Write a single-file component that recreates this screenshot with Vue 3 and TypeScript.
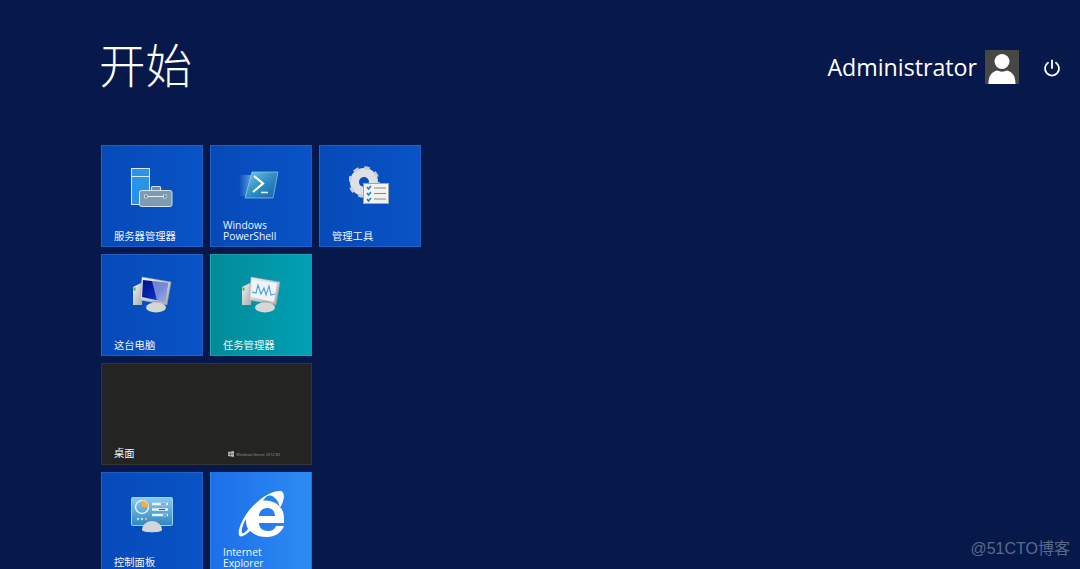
<script setup lang="ts">
interface Tile { label: string; icon: string; kind: string; wide?: boolean }
const tiles: Tile[] = [
  { label: '服务器管理器', icon: 'server', kind: 'blue' },
  { label: 'Windows PowerShell', icon: 'ps', kind: 'blue' },
  { label: '管理工具', icon: 'tools', kind: 'blue' },
  { label: '这台电脑', icon: 'pc', kind: 'blue' },
  { label: '任务管理器', icon: 'task', kind: 'teal' },
  { label: '桌面', icon: 'desktop', kind: 'dark', wide: true },
  { label: '控制面板', icon: 'panel', kind: 'blue' },
  { label: 'Internet Explorer', icon: 'ie', kind: 'sky' },
]
</script>

<template>
  <div class="screen">
    <header class="top">
      <h1 class="title">开始</h1>
      <div class="user">
        <span class="name">Administrator</span>
        <svg class="avatar" width="34" height="34" viewBox="0 0 34 34">
          <rect width="34" height="34" fill="#474845" />
          <circle cx="17" cy="11.500" r="7.500" fill="#fff" />
          <path d="M3.500 34C3.500 26 6 22.500 12 20.500C15 22 19 22 22 20.500C28 22.500 30.500 26 30.500 34Z" fill="#fff" />
        </svg>
        <svg class="power" width="20" height="20" viewBox="0 0 20 20" fill="none" stroke="#fff" stroke-width="1.800" stroke-linecap="round">
          <path d="M10 2.500V10" />
          <path d="M6 4.800A7 7 0 1 0 14 4.800" />
        </svg>
      </div>
    </header>
    <main class="grid">
      <section v-for="t in tiles" :key="t.label" class="tile" :class="[t.kind, t.icon, { wide: t.wide }]">
        <svg v-if="t.icon === 'server'" class="icon" width="44" height="41" viewBox="0 0 44 41">
          <rect x="1.500" y="1.500" width="18" height="36" fill="#2b93e6" stroke="#d5e8f7" />
          <path d="M1.500 9.500H19.500" stroke="#d5e8f7" />
          <rect x="21.500" y="19.500" width="9" height="6" rx="1" fill="#5f8fb5" stroke="#d5e0e8" stroke-width="1.200" />
          <rect x="9.500" y="23.500" width="32.500" height="16" rx="2" fill="#7d9cb2" stroke="#d5e0e8" />
          <path d="M15 29.500H36" stroke="#e8f0f5" />
          <rect x="14.500" y="28" width="2.600" height="3" fill="#3f6f95" stroke="#e8f0f5" stroke-width=".7" />
          <rect x="33.500" y="28" width="2.600" height="3" fill="#3f6f95" stroke="#e8f0f5" stroke-width=".7" />
        </svg>
        <svg v-else-if="t.icon === 'ps'" class="icon" width="46" height="34" viewBox="0 0 46 34">
          <defs>
            <linearGradient id="psg" x1="0" y1="0" x2="1" y2="1">
              <stop offset="0" stop-color="#7cc4e4" />
              <stop offset=".5" stop-color="#2d8fc4" />
              <stop offset="1" stop-color="#17639f" />
            </linearGradient>
            <linearGradient id="pst" x1="0" y1="0" x2="1" y2="0">
              <stop offset="0" stop-color="#8fc4f0" stop-opacity="0" />
              <stop offset="1" stop-color="#8fc4f0" stop-opacity=".7" />
            </linearGradient>
          </defs>
          <path d="M1 7H14L9 28H1Z" fill="url(#pst)" />
          <path d="M14 4H40L35 30H7Z" fill="url(#psg)" stroke="#a9d6ee" stroke-width=".6" />
          <path d="M16 8L25 15.500L15 24" fill="none" stroke="#fff" stroke-width="2.200" />
          <path d="M23 24.500H30" stroke="#d9eef8" stroke-width="1.600" />
        </svg>
        <svg v-else-if="t.icon === 'tools'" class="icon" width="42" height="40" viewBox="0 0 42 40">
          <circle cx="15" cy="16" r="9.500" fill="none" stroke="#dde1e4" stroke-width="9" />
          <circle cx="15" cy="16" r="14.300" fill="none" stroke="#c8ced2" stroke-width="3" stroke-dasharray="5.600 5.600" />
          <rect x="14.500" y="17.500" width="25" height="20" fill="#f2f2f0" stroke="#a2a4a4" />
          <path d="M18 21L19.500 23L22 20M18 27L19.500 29L22 26M18 33L19.500 35L22 32" fill="none" stroke="#1b7fc8" stroke-width="1.500" />
          <path d="M25 22H37M25 27.500H37M25 33H37" stroke="#82868a" stroke-width="1.200" />
        </svg>
        <svg v-else-if="t.icon === 'pc' || t.icon === 'task'" class="icon" width="40" height="38" viewBox="0 0 40 38">
          <defs>
            <linearGradient id="mong" x1="0" y1="0" x2="1" y2="1">
              <stop offset="0" stop-color="#000f8c" />
              <stop offset=".6" stop-color="#0a2ab8" />
              <stop offset="1" stop-color="#5f7be0" />
            </linearGradient>
            <linearGradient id="casg" x1="0" y1="0" x2="1" y2="1">
              <stop offset="0" stop-color="#f0f1f1" />
              <stop offset="1" stop-color="#a8abac" />
            </linearGradient>
          </defs>
          <path d="M1 12L11 7L10 30H1Z" fill="url(#casg)" />
          <rect x="1.500" y="12.500" width="2" height="3" fill="#4bb23c" />
          <path d="M10 2L39 7L35 30L8 25Z" fill="url(#casg)" stroke="#9a9c9d" stroke-width=".5" />
          <path v-if="t.icon === 'pc'" d="M11 5L36 8L33 27L10 22Z" fill="url(#mong)" />
          <path v-if="t.icon === 'pc'" d="M20 6L36 8L33 27L25 25.500Z" fill="#cfd8f6" opacity=".55" />
          <path v-else d="M11 5L36 8L33 27L10 22Z" fill="#eef4f6" />
          <path v-if="t.icon === 'task'" d="M11 17L15 18L17 10L20 19L23 13L25 20L28 11L30 20L34 19" fill="none" stroke="#4aa0d6" stroke-width="1.100" />
          <rect x="20" y="26" width="8" height="5" fill="#a8abac" />
          <ellipse cx="24" cy="32.500" rx="10" ry="5" fill="#d5d7d7" />
        </svg>
        <div v-else-if="t.icon === 'desktop'" class="brand">
          <svg width="6" height="6" viewBox="0 0 6 6"><path d="M0 1L2.700.600V2.800H0ZM3 .500L6 0V2.800H3ZM0 3.200H2.700V5.400L0 5ZM3 3.200H6V6L3 5.500Z" fill="#b9bab8" /></svg>
          <span>Windows Server 2012 R2</span>
        </div>
        <svg v-else-if="t.icon === 'panel'" class="icon" width="42" height="36" viewBox="0 0 42 36">
          <defs>
            <linearGradient id="pang" x1="0" y1="0" x2="0" y2="1">
              <stop offset="0" stop-color="#8ccbee" />
              <stop offset="1" stop-color="#2f86c4" />
            </linearGradient>
          </defs>
          <rect x="0.500" y="0.500" width="41" height="28" rx="1" fill="url(#pang)" stroke="#9fd0ee" />
          <circle cx="11" cy="10" r="6.500" fill="none" stroke="#e6f0f6" stroke-width="1.400" />
          <path d="M11 3.500A6.500 6.500 0 0 1 17.500 10H11Z" fill="#f2b04c" />
          <path d="M21 7H37M21 12.500H37M21 18H37" stroke="#e8f3fa" stroke-width="2.600" />
          <path d="M30 7H35M28 12.500H34M32 18H36" stroke="#1f5f96" stroke-width="1.200" />
          <circle cx="7" cy="22" r="1.200" fill="#b4e6f2" /><circle cx="11" cy="22" r="1.200" fill="#b4e6f2" /><circle cx="15" cy="22" r="1.200" fill="#f2b04c" />
          <path d="M11 33C11 27 17 24 21 24S31 27 31 33C31 36 11 36 11 33Z" fill="#d3d5d6" />
        </svg>
        <svg v-else-if="t.icon === 'ie'" class="icon" width="47" height="48" viewBox="0 0 47 48">
          <path d="M25 10.500C37 9.500 46 17 46 28V33H21C21 38 25 41 30 41C34 41 37 39 38 36H46C43 43 37 47 29 47C22 47 17 45 12 41C7 46 2 48 1 45C-1 40 6 25 14 17C24 6 36 0 43 1C47 2 47 10 42 18C41 12 38 8 34 6C30 4.500 28 6.500 25 10.500ZM21 26H37C37 21 34 18 29 18C25 18 21 21 21 26ZM8 29C5 34 3 41 4 43C5 44 8 42 10 39C8 36 8 32 8 29Z" fill="#fff" fill-rule="evenodd" />
        </svg>
        <span class="label">{{ t.label }}</span>
      </section>
    </main>
    <span class="mark">@51CTO博客</span>
  </div>
</template>

<style>
html, body { margin: 0; background: #07194a; }
</style>

<style scoped>
.screen {
  position: relative;
  height: 569px;
  overflow: hidden;
  background: #07194a;
  color: #fff;
  font-family: "Open Sans", "Noto Sans CJK SC", sans-serif;
}
.top {
  display: flex;
  justify-content: space-between;
  align-items: flex-start;
  height: 145px;
  box-sizing: border-box;
  padding: 0 18px 0 99px;
}
.title {
  margin: 31px 0 0;
  font-family: "Noto Sans CJK SC", sans-serif;
  font-size: 46.500px;
  font-weight: 300;
  line-height: 64px;
}
.user {
  display: flex;
  align-items: center;
  margin-top: 50px;
}
.name {
  font-size: 23.200px;
  line-height: 34px;
  margin-right: 8px;
}
.power { margin-left: 23px; position: relative; top: 1px; }
.avatar { display: block; }
.grid {
  display: grid;
  grid-template-columns: repeat(3, 102px);
  grid-auto-rows: 102px;
  gap: 7px;
  margin-left: 101px;
}
.tile {
  position: relative;
  box-sizing: border-box;
  border: 1px solid rgba(255, 255, 255, .1);
  display: flex;
  align-items: flex-start;
  justify-content: center;
  overflow: hidden;
}
.blue { background: linear-gradient(90deg, #064ab8, #0953c6); }
.teal { background: linear-gradient(90deg, #028b99, #01a0b4); }
.sky { background: linear-gradient(90deg, #1d6fe8, #2d8bf2); border-color: transparent; }
.dark { background: #242522; border-color: #353633; }
.wide { grid-column: span 2; }
.tile:nth-child(3) { grid-column: 3; }
.tile:nth-child(4) { grid-column: 1; }
.tile:nth-child(6) { grid-column: 1 / span 2; }
.tile:nth-child(7) { grid-column: 1; }
.icon { display: block; margin-top: 20px; filter: blur(.3px); }
.server .icon { margin-top: 21px; }
.ps .icon { margin-top: 22px; }
.panel .icon { margin-top: 24px; }
.ie .icon { margin-top: 17px; }
.label {
  position: absolute;
  left: 12px;
  bottom: 4px;
  width: 66px;
  font-size: 10.300px;
  line-height: 11px;
  color: #f2f6fb;
}
.dark .label { bottom: 5px; }
.panel .label { bottom: 5px; }
.brand {
  position: absolute;
  right: 31px;
  bottom: 7px;
  display: flex;
  align-items: center;
  gap: 2px;
  font-size: 3.800px;
  color: #9b9c99;
  white-space: nowrap;
}
.mark {
  position: absolute;
  right: 10px;
  bottom: 10px;
  font-family: "Liberation Sans", "Noto Sans CJK SC", sans-serif;
  font-size: 16px;
  line-height: 20px;
  color: #5b6a8b;
}
</style>
